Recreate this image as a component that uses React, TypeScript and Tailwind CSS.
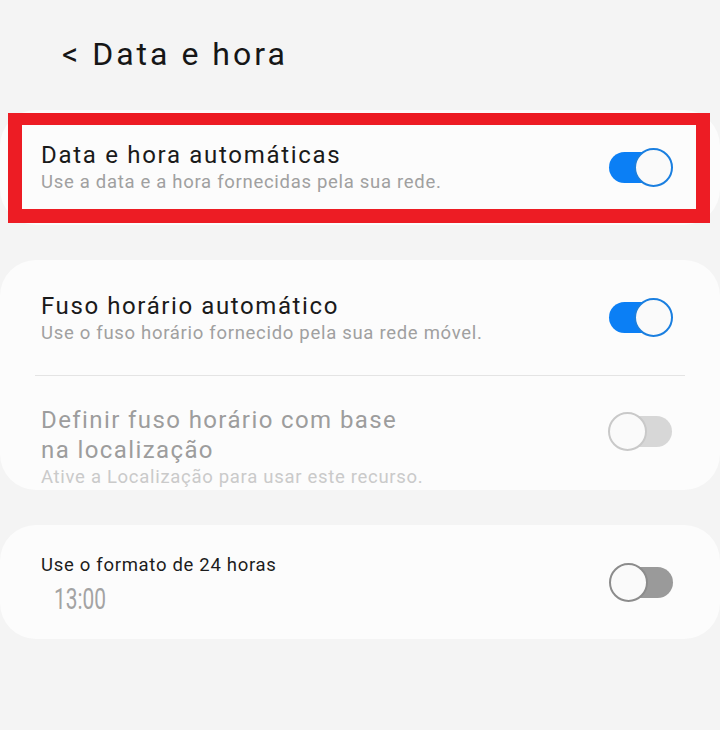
const font = { fontFamily: 'Roboto, "Noto Sans", sans-serif' };

function Toggle({ on, tone }: { on: boolean; tone: "blue" | "light" | "dark" }) {
  const track =
    tone === "blue" ? "bg-[#0b7ff5]" : tone === "light" ? "bg-[#d7d7d7]" : "bg-[#9a9a9a]";
  const ring =
    tone === "blue" ? "border-[#1a7fe0]" : tone === "light" ? "border-[#c9c9c9]" : "border-[#8c8c8c]";
  return (
    <div className="relative h-[39px] w-[64px] shrink-0">
      <div className={`absolute top-[4px] h-[31px] w-[50px] rounded-full ${track} ${on ? "left-0" : "right-0"}`} />
      <div
        className={`absolute top-0 h-[39px] w-[39px] rounded-full border-2 bg-[#fafafa] ${ring} ${on ? "right-0" : "left-0"}`}
      />
    </div>
  );
}

export default function App() {
  return (
    <div className="h-[730px] w-[720px] overflow-hidden bg-[#f4f4f4]" style={font}>
      {/* cabeçalho */}
      <div className="flex h-[110px] items-start pl-[62px] pt-[34px]">
        <h1 className="text-[32px] leading-[40px] tracking-[3px] text-[#161616]">&lt; Data e hora</h1>
      </div>

      {/* cartão 1 */}
      <div className="relative flex h-[115px] items-center justify-between rounded-[36px] bg-[#fcfcfc] pl-[41px] pr-[47px]">
        <div className="pb-[1px]">
          <div className="text-[24px] leading-[30px] tracking-[1.7px] text-[#1a1a1a]">Data e hora automáticas</div>
          <div className="text-[18.5px] leading-[25px] tracking-[0.7px] text-[#a0a0a0]">
            Use a data e a hora fornecidas pela sua rede.
          </div>
        </div>
        <Toggle on tone="blue" />
        <div className="pointer-events-none absolute left-[8px] right-[10px] top-[3px] bottom-[2px] border-x-[14px] border-b-[14px] border-t-[12px] border-[#ed1c24]" />
      </div>

      {/* cartão 2 */}
      <div className="mt-[35px] rounded-[36px] bg-[#fcfcfc]">
        <div className="flex h-[115px] items-center justify-between pl-[41px] pr-[47px]">
          <div className="pt-[2px]">
            <div className="text-[24px] leading-[30px] tracking-[1.6px] text-[#1a1a1a]">Fuso horário automático</div>
            <div className="text-[18.5px] leading-[25px] tracking-[0.7px] text-[#a0a0a0]">
              Use o fuso horário fornecido pela sua rede móvel.
            </div>
          </div>
          <Toggle on tone="blue" />
        </div>
        <div className="mx-[35px] h-px bg-[#e4e4e4]" />
        <div className="flex h-[114px] items-start justify-between pl-[41px] pr-[47px] pt-[29px]">
          <div>
            <div className="text-[24px] leading-[30px] tracking-[1.4px] text-[#9d9d9d]">
              Definir fuso horário com base
              <br />
              na localização
            </div>
            <div className="text-[18.5px] leading-[25px] tracking-[0.7px] text-[#cacaca]">
              Ative a Localização para usar este recurso.
            </div>
          </div>
          <div className="pt-[7px] pr-[1px]">
            <Toggle on={false} tone="light" />
          </div>
        </div>
      </div>

      {/* cartão 3 */}
      <div className="mt-[35px] flex h-[114px] items-center justify-between rounded-[36px] bg-[#fcfcfc] pl-[41px] pr-[47px]">
        <div className="pt-[4px]">
          <div className="text-[18.5px] leading-[26px] tracking-[0.7px] text-[#1c1c1c]">Use o formato de 24 horas</div>
          <div className="ml-[13px] mt-[4px] inline-block origin-left scale-x-[0.72] text-[29px] leading-[34px] text-[#a3a3a3]">
            13:00
          </div>
        </div>
        <Toggle on={false} tone="dark" />
      </div>
    </div>
  );
}
